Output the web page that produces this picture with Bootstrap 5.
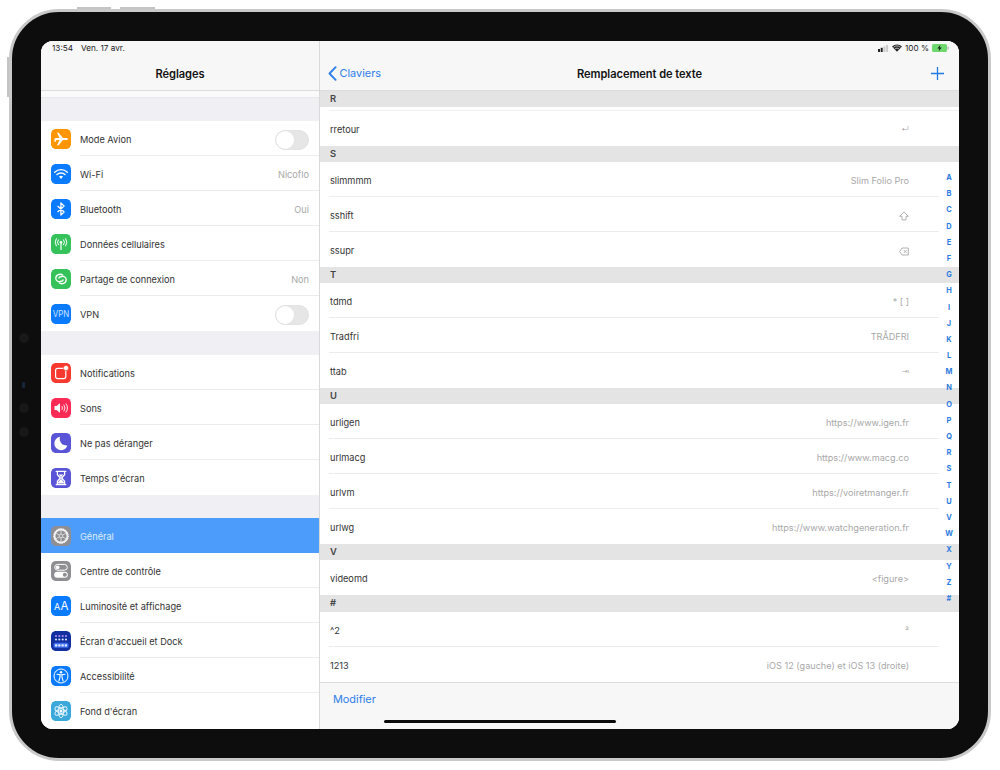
<!DOCTYPE html>
<html lang="fr">
<head>
<meta charset="utf-8">
<title>Réglages</title>
<link href="https://cdn.jsdelivr.net/npm/bootstrap@5.3.0/dist/css/bootstrap.min.css" rel="stylesheet">
<style>
html,body{height:770px;overflow:hidden}
body{background:#fff;padding:9px;font-family:Inter,"Liberation Sans","DejaVu Sans",sans-serif;font-size:9.2px;color:#333}
.tablet{position:relative;width:982px;height:752px;background:#0d0d0d;border:3px solid #c9c9c9;border-radius:50px;padding:29px 29px 28px}
.hw{position:absolute;background:#c4c4c4}
.hw-a{top:-5px;left:65px;width:34px;height:2px}
.hw-b{top:-5px;left:108px;width:35px;height:2px}
.hw-c{top:45px;left:-5px;width:2px;height:40px}
.lens{position:absolute;left:7px;width:10px;height:10px;border-radius:50%;background:#181818}
.lens-1{top:321px}
.lens-2{top:391px}
.lens-3{top:415px}
.lens-led{top:370px;width:3px;height:6px;left:10px;border-radius:1px;background:#16263c}
.display{width:918px;height:688px;border-radius:12px;overflow:hidden;background:#fff}
.side{width:279px;flex:none;border-right:1px solid #d9d9d9;background:#efeff4}
.pane{position:relative;background:#fff;min-width:0}
.barhead{height:50px;background:#f7f7f7;border-bottom:1px solid #dcdcdc;flex:none}
.stat{height:14px;padding:0 11px;font-size:8.2px;line-height:14px;color:#222}
.stat-right{gap:3px;padding-right:10px}
.navline{height:35px;padding:2px 11px 0 8px;position:relative}
.navtitle{font-weight:600;font-size:11.1px;color:#111;position:absolute;left:0;right:0;text-align:center;top:11px;letter-spacing:-.05px}
.backlink{color:#2f80e8;font-size:10.9px;text-decoration:none;z-index:1;gap:2.500px}
.plusmark{margin-right:4px;z-index:1}
.gapfirst{height:30px;flex:none;background:linear-gradient(#fafafa 0 6px,#e7e7ec 6px 7px,#efeff4 7px)}
.gapmid{height:24px;flex:none}
.gaplast{height:23px;flex:none}
.setitem.list-group-item{height:35px;padding:0 0 0 10px;border:0;background:#fff;color:#333;border-radius:0;flex:none}
.tile{width:20px;height:20px;border-radius:4.5px;flex:none;margin-right:9px;display:block}
.setlabel{height:100%;border-bottom:1px solid #ececec;padding:3px 10px 0 0}
.setitem:last-child .setlabel{border-bottom:0}
.setvalue{color:#a9a9a9}
.setitem.selected{background:#4c9dfb;color:#dcecff}
.setitem.selected .setlabel{border-bottom:0}
.toggle.form-check-input{width:34px;height:20px;margin:0;background-color:#e6e6e6;border:1px solid #e2e2e2;float:none;background-image:url("data:image/svg+xml,%3csvg xmlns='http://www.w3.org/2000/svg' viewBox='-4 -4 8 8'%3e%3ccircle r='4' fill='%23fff'/%3e%3c/svg%3e")}
.formwrap.form-switch{padding:0;min-height:0;margin:0;display:flex}
.grouphead{height:16px;flex:none;background:#e4e4e4;font-weight:600;color:#444;padding-left:10px;line-height:16px;font-size:9.4px}
.grouphead.tall{height:17px}
.repl.list-group-item{height:35px;padding:3px 30px 0 1px;margin:0 20px 0 9px;border:0;border-bottom:1px solid #ececec;background:#fff;color:#333;border-radius:0;flex:none}
.repl:last-child.list-group-item{border-bottom:0;margin-right:0;padding-right:50px}
.repl.firstrow.list-group-item{height:39px;padding-top:6px;border-bottom:0;background:linear-gradient(#fff 0 3px,#f0f0f0 3px 4px,#fff 4px)}
.replval{color:#a8a8a8;font-size:9.15px;font-family:Inter,"DejaVu Sans",sans-serif}
.replval.tinyglyph{font-size:7.5px}
.keysvg{display:block}
.barfoot{height:47px;flex:none;background:#f7f7f7;border-top:1px solid #dcdcdc;padding:9px 0 0 13px;color:#2f80e8;font-size:10.9px;line-height:14px}
.barfoot a{color:#2f80e8;text-decoration:none}
.azlist{position:absolute;top:129px;right:0;width:20px;font-size:7.4px;font-weight:700;color:#2a7be0}
.azlist span{height:16.19px;line-height:16.19px;text-align:center;display:block}
.homebar{position:absolute;left:64px;bottom:6px;width:232px;height:3px;border-radius:2px;background:#0a0a0a}
</style>
</head>
<body>
<div class="tablet">
  <i class="hw hw-a"></i><i class="hw hw-b"></i><i class="hw hw-c"></i>
  <i class="lens lens-1"></i><i class="lens lens-led"></i><i class="lens lens-2"></i><i class="lens lens-3"></i>
  <div class="display d-flex">
    <!-- Réglages -->
    <div class="side d-flex flex-column">
      <div class="barhead">
        <div class="stat d-flex gap-2"><span>13:54</span><span>Ven. 17 avr.</span></div>
        <div class="navline"><div class="navtitle">Réglages</div></div>
      </div>
      <div class="gapfirst"></div>
      <div class="list-group list-group-flush">
        <div class="list-group-item setitem d-flex align-items-center">
          <svg class="tile" viewBox="0 0 20 20"><rect width="20" height="20" rx="4.5" fill="#ff9500"/><path d="M3.500 10c0-.7 1-1 2-1h3L6 3.800h1.600L12 9h3c1 0 2 .4 2 1s-1 1-2 1h-3l-4.400 5.200H6L8.500 11h-3l-1 1.700H3.200z" fill="#fff"/></svg>
          <div class="setlabel flex-grow-1 d-flex align-items-center justify-content-between"><span>Mode Avion</span><div class="formwrap form-check form-switch"><input class="form-check-input toggle" type="checkbox" aria-label="Mode Avion"></div></div>
        </div>
        <div class="list-group-item setitem d-flex align-items-center">
          <svg class="tile" viewBox="0 0 20 20"><rect width="20" height="20" rx="4.5" fill="#0a7aff"/><g fill="none" stroke="#fff" stroke-width="1.400" stroke-linecap="round"><path d="M3.700 8.200a9 9 0 0 1 12.600 0"/><path d="M6 10.600a5.800 5.800 0 0 1 8 0"/></g><path d="M8 12.600a3 3 0 0 1 4 0L10 15z" fill="#fff"/></svg>
          <div class="setlabel flex-grow-1 d-flex align-items-center justify-content-between"><span>Wi-Fi</span><span class="setvalue">Nicoflo</span></div>
        </div>
        <div class="list-group-item setitem d-flex align-items-center">
          <svg class="tile" viewBox="0 0 20 20"><rect width="20" height="20" rx="4.5" fill="#0a7aff"/><path d="M6.600 7l6.500 6-3.200 3V4l3.200 3-6.500 6" fill="none" stroke="#fff" stroke-width="1.300" stroke-linejoin="round"/></svg>
          <div class="setlabel flex-grow-1 d-flex align-items-center justify-content-between"><span>Bluetooth</span><span class="setvalue">Oui</span></div>
        </div>
        <div class="list-group-item setitem d-flex align-items-center">
          <svg class="tile" viewBox="0 0 20 20"><rect width="20" height="20" rx="4.500" fill="#36c25b"/><circle cx="10" cy="8.300" r="1.300" fill="#fff"/><path d="M10 9v7" stroke="#fff" stroke-width="1.200"/><g fill="none" stroke="#fff" stroke-width="1" stroke-linecap="round"><path d="M7.400 5.800a4 4 0 0 0 0 5"/><path d="M12.600 5.800a4 4 0 0 1 0 5"/><path d="M5.300 4.700a6.500 6.500 0 0 0 0 7.200"/><path d="M14.700 4.700a6.500 6.500 0 0 1 0 7.200"/></g></svg>
          <div class="setlabel flex-grow-1 d-flex align-items-center"><span>Données cellulaires</span></div>
        </div>
        <div class="list-group-item setitem d-flex align-items-center">
          <svg class="tile" viewBox="0 0 20 20"><rect width="20" height="20" rx="4.500" fill="#36c25b"/><g fill="none" stroke="#fff" stroke-width="1.300"><path d="M12 6.200c-2.800-2-7.200-.6-7.200 3 0 3 3 4.200 5 3.200"/><path d="M8 13.800c2.800 2 7.200.6 7.200-3 0-3-3-4.200-5-3.200"/><path d="M7.700 9.500c.4-1.600 2-2 3-1.600"/><path d="M12.300 10.500c-.4 1.600-2 2-3 1.600"/></g></svg>
          <div class="setlabel flex-grow-1 d-flex align-items-center justify-content-between"><span>Partage de connexion</span><span class="setvalue">Non</span></div>
        </div>
        <div class="list-group-item setitem d-flex align-items-center">
          <svg class="tile" viewBox="0 0 20 20"><rect width="20" height="20" rx="4.500" fill="#0a7aff"/><text x="10" y="13.400" text-anchor="middle" font-size="8.600" fill="#cfe4ff" font-family="Inter,sans-serif" textLength="16.500" lengthAdjust="spacingAndGlyphs">VPN</text></svg>
          <div class="setlabel flex-grow-1 d-flex align-items-center justify-content-between"><span>VPN</span><div class="formwrap form-check form-switch"><input class="form-check-input toggle" type="checkbox" aria-label="VPN"></div></div>
        </div>
      </div>
      <div class="gapmid"></div>
      <div class="list-group list-group-flush">
        <div class="list-group-item setitem d-flex align-items-center">
          <svg class="tile" viewBox="0 0 20 20"><rect width="20" height="20" rx="4.500" fill="#f8392f"/><rect x="4.600" y="5.400" width="10.200" height="10.200" rx="2" fill="none" stroke="#fff" stroke-width="1.200"/><circle cx="15" cy="5" r="2.600" fill="#fff" stroke="#f8392f" stroke-width=".6"/></svg>
          <div class="setlabel flex-grow-1 d-flex align-items-center"><span>Notifications</span></div>
        </div>
        <div class="list-group-item setitem d-flex align-items-center">
          <svg class="tile" viewBox="0 0 20 20"><rect width="20" height="20" rx="4.500" fill="#fb2b55"/><path d="M3.500 8h2l3.500-2.800v9.600L5.500 12h-2z" fill="#fff"/><g fill="none" stroke="#fff" stroke-width="1" stroke-linecap="round" opacity=".9"><path d="M11 8.400a2.500 2.500 0 0 1 0 3.200"/><path d="M13 7a5 5 0 0 1 0 6"/><path d="M15 5.800a7 7 0 0 1 0 8.400"/></g></svg>
          <div class="setlabel flex-grow-1 d-flex align-items-center"><span>Sons</span></div>
        </div>
        <div class="list-group-item setitem d-flex align-items-center">
          <svg class="tile" viewBox="0 0 20 20"><rect width="20" height="20" rx="4.500" fill="#5a55d6"/><path d="M9 3.800a6.700 6.700 0 1 0 7.400 8.700A6.800 6.800 0 0 1 9 3.800z" fill="#fff"/></svg>
          <div class="setlabel flex-grow-1 d-flex align-items-center"><span>Ne pas déranger</span></div>
        </div>
        <div class="list-group-item setitem d-flex align-items-center">
          <svg class="tile" viewBox="0 0 20 20"><rect width="20" height="20" rx="4.500" fill="#5a55d6"/><path d="M5.200 3.400h9.600M5.200 16.600h9.600M6.400 3.400v3.400l3 3.200-3 3.200v3.400M13.600 3.400v3.400l-3 3.200 3 3.200v3.400" fill="none" stroke="#fff" stroke-width="1.300" stroke-linecap="round"/><path d="M7.800 6.500h4.400L10 9.300zM10 10.800l3 3.800v1H7v-1z" fill="#fff"/></svg>
          <div class="setlabel flex-grow-1 d-flex align-items-center"><span>Temps d'écran</span></div>
        </div>
      </div>
      <div class="gaplast"></div>
      <div class="list-group list-group-flush flex-grow-1 bg-white">
        <div class="list-group-item setitem selected d-flex align-items-center">
          <svg class="tile" viewBox="0 0 20 20"><rect width="20" height="20" rx="4.500" fill="#8e8e93"/><circle cx="10" cy="10" r="6.500" fill="none" stroke="#eee" stroke-width="2"/><circle cx="10" cy="10" r="7.300" fill="none" stroke="#fff" stroke-width="1" stroke-dasharray="1.200 1.200"/><circle cx="10" cy="10" r="1.800" fill="none" stroke="#eee" stroke-width=".8"/><path d="M10 4.500v3.500M14.800 7.200l-3 1.800M14.800 12.800l-3-1.800M10 15.500V12M5.200 12.800l3-1.800M5.200 7.200l3 1.800" stroke="#eee" stroke-width=".8"/></svg>
          <div class="setlabel flex-grow-1 d-flex align-items-center"><span>Général</span></div>
        </div>
        <div class="list-group-item setitem d-flex align-items-center">
          <svg class="tile" viewBox="0 0 20 20"><rect width="20" height="20" rx="4.500" fill="#8e8e93"/><rect x="3.700" y="3.400" width="12.600" height="5.800" rx="2.900" fill="none" stroke="#fff" stroke-width="1"/><circle cx="6.600" cy="6.300" r="1.900" fill="#fff"/><rect x="3.200" y="10.800" width="13.600" height="6" rx="3" fill="#fff"/><circle cx="13.800" cy="13.800" r="2" fill="#8e8e93"/></svg>
          <div class="setlabel flex-grow-1 d-flex align-items-center"><span>Centre de contrôle</span></div>
        </div>
        <div class="list-group-item setitem d-flex align-items-center">
          <svg class="tile" viewBox="0 0 20 20"><rect width="20" height="20" rx="4.500" fill="#0a7aff"/><text x="6.200" y="14.200" text-anchor="middle" font-size="9" fill="#fff" font-family="Inter,sans-serif">A</text><text x="13.400" y="14.200" text-anchor="middle" font-size="11.500" fill="#fff" font-family="Inter,sans-serif">A</text></svg>
          <div class="setlabel flex-grow-1 d-flex align-items-center"><span>Luminosité et affichage</span></div>
        </div>
        <div class="list-group-item setitem d-flex align-items-center">
          <svg class="tile" viewBox="0 0 20 20"><rect width="20" height="20" rx="4.500" fill="#12309f"/><g fill="#b08df0"><circle cx="5" cy="5" r="1.100"/><circle cx="8.300" cy="5" r="1.100"/><circle cx="11.700" cy="5" r="1.100"/><circle cx="15" cy="5" r="1.100"/></g><g fill="#cfe0ff"><circle cx="5" cy="8.500" r="1.100"/><circle cx="8.300" cy="8.500" r="1.100"/><circle cx="11.700" cy="8.500" r="1.100"/><circle cx="15" cy="8.500" r="1.100"/></g><rect x="2.500" y="11.800" width="15" height="5" rx="1.500" fill="#3f6ff0"/><g fill="#e4edff"><rect x="4" y="13.200" width="2.300" height="2.300" rx=".6"/><rect x="7.200" y="13.200" width="2.300" height="2.300" rx=".6"/><rect x="10.500" y="13.200" width="2.300" height="2.300" rx=".6"/><rect x="13.700" y="13.200" width="2.300" height="2.300" rx=".6"/></g></svg>
          <div class="setlabel flex-grow-1 d-flex align-items-center"><span>Écran d'accueil et Dock</span></div>
        </div>
        <div class="list-group-item setitem d-flex align-items-center">
          <svg class="tile" viewBox="0 0 20 20"><rect width="20" height="20" rx="4.500" fill="#0a7aff"/><circle cx="10" cy="10" r="7" fill="none" stroke="#fff" stroke-width="1"/><circle cx="10" cy="6.200" r="1.200" fill="#fff"/><path d="M6 8.200l3 .6v2.600l-1.200 3.800M14 8.200l-3 .6v2.600l1.200 3.800M9 8.800h2" fill="none" stroke="#fff" stroke-width="1.100" stroke-linecap="round"/></svg>
          <div class="setlabel flex-grow-1 d-flex align-items-center"><span>Accessibilité</span></div>
        </div>
        <div class="list-group-item setitem d-flex align-items-center">
          <svg class="tile" viewBox="0 0 20 20"><rect width="20" height="20" rx="4.500" fill="#3ba8dc"/><g fill="none" stroke="#eaf6ff" stroke-width=".9"><ellipse cx="10" cy="10" rx="2.600" ry="6.800"/><ellipse cx="10" cy="10" rx="2.600" ry="6.800" transform="rotate(60 10 10)"/><ellipse cx="10" cy="10" rx="2.600" ry="6.800" transform="rotate(120 10 10)"/></g><circle cx="10" cy="10" r="1.500" fill="#fff"/></svg>
          <div class="setlabel flex-grow-1 d-flex align-items-center"><span>Fond d'écran</span></div>
        </div>
      </div>
    </div>
    <!-- Remplacement de texte -->
    <div class="pane d-flex flex-column flex-grow-1">
      <div class="barhead">
        <div class="stat stat-right d-flex justify-content-end align-items-center">
          <svg width="11" height="7" viewBox="0 0 11 7"><rect x="0" y="4" width="2" height="3" fill="#222"/><rect x="2.700" y="2.800" width="2" height="4.200" fill="#222"/><rect x="5.400" y="1.400" width="2" height="5.600" fill="#ccc"/><rect x="8.100" y="0" width="2" height="7" fill="#ccc"/></svg>
          <svg width="10" height="8" viewBox="0 0 10 8"><path d="M5 7.800L0 2.600a7.200 7.200 0 0 1 10 0z" fill="#222"/><path d="M1.500 3.300a5 5 0 0 1 7 0" stroke="#f7f7f7" stroke-width=".7" fill="none"/><path d="M3 4.900a3 3 0 0 1 4 0" stroke="#f7f7f7" stroke-width=".7" fill="none"/></svg>
          <span>100 %</span>
          <svg width="17" height="8" viewBox="0 0 17 8"><rect x="0" y="0" width="15" height="8" rx="1.600" fill="#6fd96f"/><path d="M8.500 0.800L5.400 4.400h2l-.8 2.800 3.100-3.600h-2z" fill="#111"/><rect x="15.500" y="2.500" width="1.200" height="3" rx=".5" fill="#a9a9a9"/></svg>
        </div>
        <div class="navline d-flex align-items-center justify-content-between">
          <a href="#" class="backlink d-flex align-items-center"><svg width="9" height="15" viewBox="0 0 9 15"><path d="M7.600 1.200L1.500 7.500l6.100 6.300" fill="none" stroke="#2f80e8" stroke-width="1.900" stroke-linecap="round" stroke-linejoin="round"/></svg><span>Claviers</span></a>
          <div class="navtitle">Remplacement de texte</div>
          <svg class="plusmark" width="13" height="13" viewBox="0 0 13 13"><path d="M6.500 0v13M0 6.500h13" stroke="#1f7ae8" stroke-width="1.300"/></svg>
        </div>
      </div>
      <div class="grouphead">R</div>
      <div class="list-group list-group-flush">
        <div class="list-group-item repl firstrow d-flex align-items-center justify-content-between"><span>rretour</span><span class="replval tinyglyph">↵</span></div>
      </div>
      <div class="grouphead">S</div>
      <div class="list-group list-group-flush">
        <div class="list-group-item repl d-flex align-items-center justify-content-between"><span>slimmmm</span><span class="replval">Slim Folio Pro</span></div>
        <div class="list-group-item repl d-flex align-items-center justify-content-between"><span>sshift</span><svg class="keysvg" width="10" height="10" viewBox="0 0 10 10" role="img" aria-label="Maj"><path d="M5 .8L9.300 5.300H7v3.600H3V5.300H.7z" fill="none" stroke="#a8a8a8" stroke-width=".9" stroke-linejoin="round"/></svg></div>
        <div class="list-group-item repl d-flex align-items-center justify-content-between"><span>ssupr</span><svg class="keysvg" width="10" height="9" viewBox="0 0 10 9" role="img" aria-label="Suppr"><path d="M3 1h6.300v7H3L.6 4.500z" fill="none" stroke="#a8a8a8" stroke-width=".9" stroke-linejoin="round"/><path d="M4.700 3l3 3M7.700 3l-3 3" stroke="#a8a8a8" stroke-width=".8"/></svg></div>
      </div>
      <div class="grouphead">T</div>
      <div class="list-group list-group-flush">
        <div class="list-group-item repl d-flex align-items-center justify-content-between"><span>tdmd</span><span class="replval">* [ ]</span></div>
        <div class="list-group-item repl d-flex align-items-center justify-content-between"><span>Tradfri</span><span class="replval">TRÅDFRI</span></div>
        <div class="list-group-item repl d-flex align-items-center justify-content-between"><span>ttab</span><span class="replval tinyglyph">⇥</span></div>
      </div>
      <div class="grouphead">U</div>
      <div class="list-group list-group-flush">
        <div class="list-group-item repl d-flex align-items-center justify-content-between"><span>urligen</span><span class="replval">https://www.igen.fr</span></div>
        <div class="list-group-item repl d-flex align-items-center justify-content-between"><span>urlmacg</span><span class="replval">https://www.macg.co</span></div>
        <div class="list-group-item repl d-flex align-items-center justify-content-between"><span>urlvm</span><span class="replval">https://voiretmanger.fr</span></div>
        <div class="list-group-item repl d-flex align-items-center justify-content-between"><span>urlwg</span><span class="replval">https://www.watchgeneration.fr</span></div>
      </div>
      <div class="grouphead">V</div>
      <div class="list-group list-group-flush">
        <div class="list-group-item repl d-flex align-items-center justify-content-between"><span>videomd</span><span class="replval">&lt;figure&gt;</span></div>
      </div>
      <div class="grouphead tall">#</div>
      <div class="list-group list-group-flush">
        <div class="list-group-item repl d-flex align-items-center justify-content-between"><span>^2</span><span class="replval">²</span></div>
        <div class="list-group-item repl d-flex align-items-center justify-content-between"><span>1213</span><span class="replval">iOS 12 (gauche) et iOS 13 (droite)</span></div>
      </div>
      <div class="flex-grow-1"></div>
      <div class="barfoot"><a href="#">Modifier</a></div>
      <div class="azlist d-flex flex-column"><span>A</span><span>B</span><span>C</span><span>D</span><span>E</span><span>F</span><span>G</span><span>H</span><span>I</span><span>J</span><span>K</span><span>L</span><span>M</span><span>N</span><span>O</span><span>P</span><span>Q</span><span>R</span><span>S</span><span>T</span><span>U</span><span>V</span><span>W</span><span>X</span><span>Y</span><span>Z</span><span>#</span></div>
      <div class="homebar"></div>
    </div>
  </div>
</div>
<script src="https://cdn.jsdelivr.net/npm/bootstrap@5.3.0/dist/js/bootstrap.bundle.min.js"></script>
</body>
</html>
